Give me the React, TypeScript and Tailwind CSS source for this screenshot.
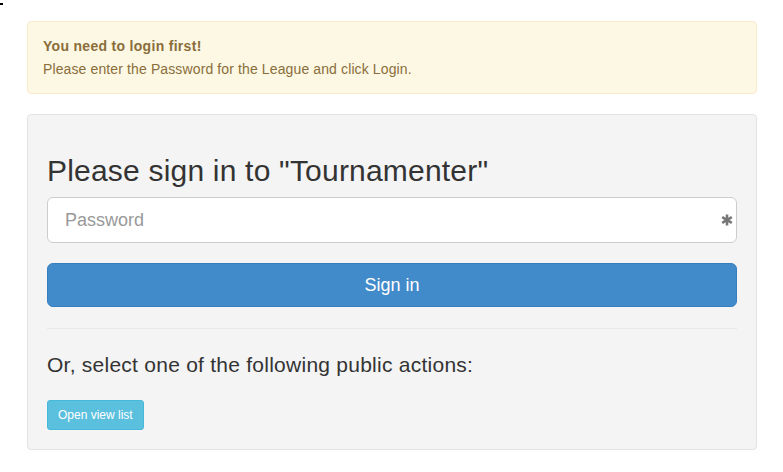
export default function App() {
  return (
    <div className="min-h-[472px] bg-white pt-[3px] font-['Liberation_Sans',Arial,sans-serif] text-[#333]">
      <div className="h-[2px] w-[3px] bg-black" />

      <div className="ml-[27px] mr-[26px] mt-[16px]">
        {/* alert */}
        <div className="rounded-[4px] border border-[#faebcc] bg-[#fcf8e3] px-[15px] pt-[14px] pb-[15px] text-[#8a6d3b]">
          <div className="h-[20px] text-[14px] font-bold leading-[20px] tracking-[0.3px]">You need to login first!</div>
          <div className="mt-[4px] text-[14px] leading-[18px] tracking-[0.12px]">
            Please enter the Password for the League and click Login.
          </div>
        </div>

        {/* sign in well */}
        <div className="mt-[20px] rounded-[4px] border border-[#e3e3e3] bg-[#f4f4f4] p-[19px]">
          <h2 className="mt-[20px] mb-[10px] text-[30px] leading-[33px] tracking-[0.2px]">Please sign in to "Tournamenter"</h2>

          <div className="relative">
            <input
              type="password"
              placeholder="Password"
              className="block h-[46px] w-full rounded-[6px] border border-[#ccc] bg-white px-[17px] text-[18px] text-[#555] placeholder:text-[#999] outline-none"
            />
            <svg className="absolute right-[4px] top-[17px] h-[12px] w-[12px]" viewBox="0 0 12 12">
              <g stroke="#777" strokeWidth="2.6" strokeLinecap="butt">
                <line x1="6" y1="0.5" x2="6" y2="11.5" />
                <line x1="1.2" y1="3.2" x2="10.8" y2="8.8" />
                <line x1="1.2" y1="8.8" x2="10.8" y2="3.2" />
              </g>
            </svg>
          </div>

          <button className="mt-[20px] block h-[44px] w-full rounded-[6px] border border-[#357ebd] bg-[#428bca] text-[18px] text-white">
            Sign in
          </button>

          <hr className="mt-[21px] border-t border-[#e8e8e8]" />

          <h4 className="mt-[25px] text-[21px] leading-[22px] tracking-[0.25px]">Or, select one of the following public actions:</h4>

          <button className="mt-[24px] h-[30px] rounded-[3px] border border-[#46b8da] bg-[#5bc0de] px-[10px] text-[12px] leading-[18px] text-white">
            Open view list
          </button>
        </div>
      </div>
    </div>
  );
}
